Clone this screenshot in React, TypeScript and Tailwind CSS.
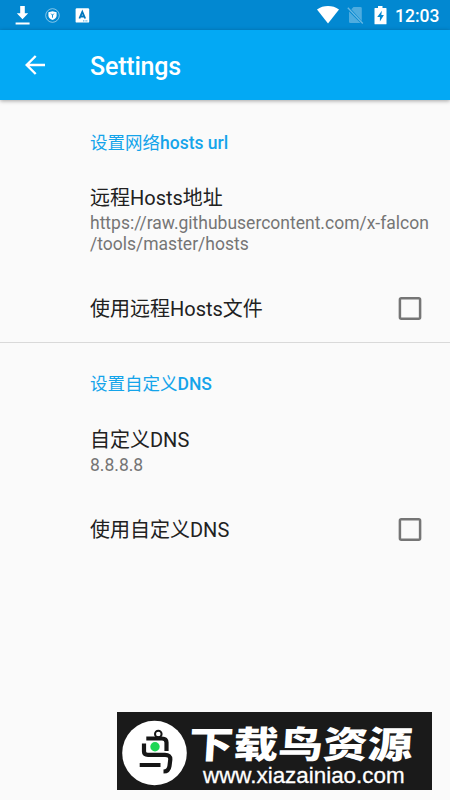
import { useState } from 'react';
import clsx from 'clsx';

interface CategoryProps {
  title: string;
  latinTitle: string;
  children: React.ReactNode;
  className?: string;
}

interface PreferenceProps {
  title: string;
  summary?: string[];
  className?: string;
}

interface CheckPreferenceProps {
  title: string;
  className?: string;
}

const StatusBar: React.FC = () => (
  <div className="flex h-[30px] items-center justify-between bg-[#0288d1] pl-[15px] pr-[10px] text-white">
    <div className="flex items-center">
      <svg width="15" height="20" viewBox="0 0 15 20" fill="currentColor">
        <path d="M5.2 1h4.6v7.2h3.4l-5.7 6-5.7-6h3.4zM.6 17.4h14v2H.6z" />
      </svg>
      <svg className="ml-[15px]" width="15" height="15" viewBox="0 0 15 15" fill="none">
        <circle cx="7.5" cy="7.5" r="6.8" stroke="currentColor" strokeWidth=".8" opacity=".65" />
        <path d="M7.5 3.2l4.1 1v3.2c0 2.1-1.7 3.5-4.1 4.6-2.4-1.1-4.1-2.5-4.1-4.6V4.2z" fill="currentColor" />
        <path d="M6.1 5.6l1.4 1.5 1.4-1.5M7.5 7v2.7" stroke="#0288d1" strokeWidth=".9" />
      </svg>
      <svg className="ml-[15px]" width="15" height="15" viewBox="0 0 15 15">
        <rect x=".6" y=".3" width="13.6" height="14.3" rx="1.2" fill="currentColor" />
        <path d="M4.4 10.5L7.3 3.8l2.9 6.7M5.7 8.5h3.2" fill="none" stroke="#0277bd" strokeWidth="1.8" />
        <path d="M8 12.9h5" stroke="#0288d1" strokeWidth=".8" strokeDasharray="1 .6" />
      </svg>
    </div>
    <div className="flex items-center">
      <svg width="22" height="18" viewBox="0 0 22 18" fill="currentColor">
        <path d="M0 3.4C6.3-1.1 15.7-1.1 22 3.4L11 17.5z" />
      </svg>
      <svg className="ml-[8px]" width="17" height="18" viewBox="0 0 17 18">
        <path d="M6.5 1H13.5q1.3 0 1.3 1.3V15L4.3 3.2zM2 5.5L13.5 17H3.3Q2 17 2 15.7z" fill="#fff" opacity=".3" />
        <path d="M.8 1.7L15.8 17.5" stroke="#fff" strokeWidth="1.3" opacity=".4" />
      </svg>
      <svg className="ml-[10px]" width="13" height="19" viewBox="0 0 13 19">
        <path d="M4 0h4.5v2H12q.5 0 .5.5v15.2q0 .5-.5.5H1q-.5 0-.5-.5V2.5Q.5 2 1 2h3z" fill="#fff" />
        <path d="M7.9 4.8L3.2 11h2.7v4.5L9.9 9H7.3z" fill="#0288d1" />
      </svg>
      <span className="ml-[8px] w-[45px] pt-[2px] text-[17.5px] leading-[28px] font-medium whitespace-nowrap">12:03</span>
    </div>
  </div>
);

const AppBar: React.FC = () => (
  <header className="flex h-[70px] items-center bg-[#03a9f4] pl-[25px] text-white shadow-[0_1px_4px_rgba(0,0,0,0.35)]">
    <button type="button" aria-label="Back">
      <svg width="20" height="20" viewBox="0 0 20 20" fill="none" stroke="currentColor" strokeWidth="2.4">
        <path d="M20 10H2.2M10.7 1L1.7 10l9 9" />
      </svg>
    </button>
    <h1 className="ml-[45px] pt-[3px] text-[25px] leading-[30px] font-medium tracking-[-0.2px]">Settings</h1>
  </header>
);

const Category: React.FC<CategoryProps> = ({ title, latinTitle, children, className }) => (
  <section className={className}>
    <h2 className="pl-[90px] text-[17.5px] leading-[20px] font-medium text-[#14a4ea]">
      <span className="font-normal">{title}</span>
      {latinTitle}
    </h2>
    {children}
  </section>
);

const Preference: React.FC<PreferenceProps> = ({ title, summary = [], className }) => (
  <div className={clsx('pl-[90px]', className)}>
    <div className="text-[20px] leading-[24px] text-[#212121]">{title}</div>
    <div className="pt-[3px] text-[17.5px] leading-[20.5px] text-[#757575]">
      {summary.map((line) => (
        <div key={line} className="whitespace-nowrap">
          {line}
        </div>
      ))}
    </div>
  </div>
);

const CheckPreference: React.FC<CheckPreferenceProps> = ({ title, className }) => {
  const [checked, setChecked] = useState(false);

  return (
    <div className={clsx('flex items-center justify-between pr-[28px] pl-[90px]', className)}>
      <span className="text-[20px] leading-[24px] text-[#212121]">{title}</span>
      <button
        type="button"
        role="checkbox"
        aria-checked={checked}
        aria-label={title}
        onClick={() => setChecked(!checked)}
        className="mb-[1px]"
      >
        <svg width="24" height="23" viewBox="0 0 24 23">
          <rect
            x="1.9"
            y="1.3"
            width="20.2"
            height="20.4"
            rx="1.4"
            fill={checked ? '#03a9f4' : 'none'}
            stroke={checked ? '#03a9f4' : '#757575'}
            strokeWidth="2.5"
          />
        </svg>
      </button>
    </div>
  );
};

const Watermark: React.FC = () => (
  <div className="absolute top-[712px] left-[117px] flex h-[78px] w-[315px] items-start overflow-hidden bg-[#1a1a1a] text-white">
    <svg className="mt-[8px] ml-[5px] shrink-0" width="65" height="66" viewBox="0 0 65 66" fill="none">
      <circle cx="32.5" cy="33" r="32.3" fill="#fff" />
      <circle cx="36.3" cy="14" r="3.3" stroke="#161616" strokeWidth="2" />
      <path
        d="M24.3 18.5H40Q44.5 18.5 44.5 22.5V31M22 23.5V31.500Q22 34.800 26 34.800H43Q48.500 34.800 48.300 39.500L47.500 46Q46.800 51.500 41.500 51.500M17.700 45H38.500"
        stroke="#161616"
        strokeWidth="4.2"
      />
      <circle cx="33" cy="26.7" r="4.7" fill="#1fd655" />
    </svg>
    <div className="flex flex-col">
      <span className="mt-[11px] ml-[2px] origin-left scale-x-[1.21] -skew-x-3 font-['Noto_Sans_CJK_SC',sans-serif] text-[37px] leading-[38px] font-black whitespace-nowrap">
        下载鸟资源
      </span>
      <span className="mt-[3px] ml-[16px] font-['Liberation_Sans',sans-serif] text-[22.4px] leading-[24px] whitespace-nowrap [-webkit-text-stroke:0.3px_white]">
        www.xiazainiao.com
      </span>
    </div>
  </div>
);

const App: React.FC = () => (
  <div className="relative h-[800px] w-[450px] overflow-hidden bg-[#fafafa] font-[Roboto,'Noto_Sans_CJK_SC',sans-serif]">
    <StatusBar />
    <AppBar />
    <main>
      <Category title="设置网络" latinTitle="hosts url" className="border-b border-[#d9d9d9] pt-[33px]">
        <Preference
          title="远程Hosts地址"
          summary={['https://raw.githubusercontent.com/x-falcon', '/tools/master/hosts']}
          className="pt-[33px]"
        />
        <CheckPreference title="使用远程Hosts文件" className="pt-[43px] pb-[21px]" />
      </Category>
      <Category title="设置自定义" latinTitle="DNS" className="pt-[31px]">
        <Preference title="自定义DNS" summary={['8.8.8.8']} className="pt-[34px]" />
        <CheckPreference title="使用自定义DNS" className="pt-[42px]" />
      </Category>
    </main>
    <Watermark />
  </div>
);

export default App;
